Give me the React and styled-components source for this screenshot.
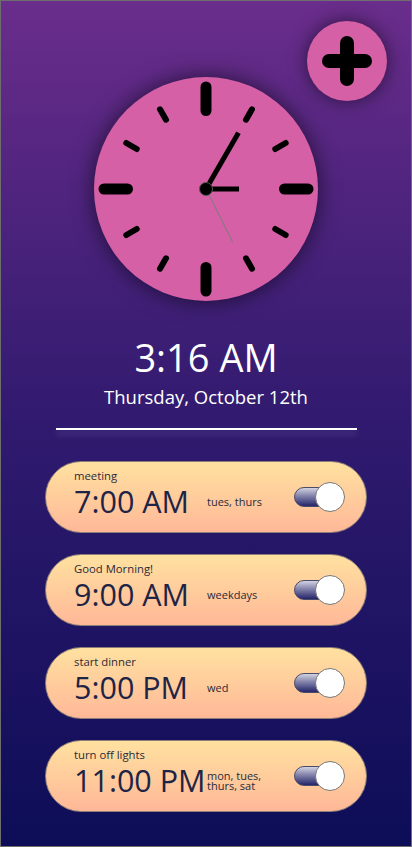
import React from "react";
import styled, { createGlobalStyle } from "styled-components";

const Global = createGlobalStyle`
  html, body { margin: 0; padding: 0; }
  body { font-family: "Open Sans", "Noto Sans", sans-serif; }
  * { box-sizing: border-box; }
`;

const Page = styled.div`
  position: relative;
  width: 412px;
  height: 847px;
  border: 1px solid #6e6e6e;
  background: linear-gradient(180deg, #6a2d8b 0%, #301a6f 50%, #0d0d57 100%);
  display: flex;
  flex-direction: column;
  align-items: center;
  overflow: hidden;
`;

const AddButton = styled.button`
  position: absolute;
  top: 20px;
  right: 24px;
  width: 80px;
  height: 80px;
  border-radius: 50%;
  border: none;
  padding: 0;
  background: #d660a5;
  box-shadow: 0 0 18px rgba(0, 0, 0, 0.55);
  display: flex;
  align-items: center;
  justify-content: center;
`;

const ClockFace = styled.div`
  margin-top: 76px;
  width: 224px;
  height: 224px;
  border-radius: 50%;
  background: #d660a5;
  box-shadow: 0 0 22px rgba(0, 0, 0, 0.6);
  flex-shrink: 0;
`;

const TimeText = styled.div`
  margin-top: 34px;
  font-size: 38px;
  line-height: 44px;
  color: #ffffff;
  text-align: center;
`;

const DateText = styled.div`
  margin-top: 6px;
  font-size: 18.5px;
  line-height: 24px;
  color: #ffffff;
  text-align: center;
`;

const Divider = styled.div`
  margin-top: 19px;
  width: 301px;
  height: 1.5px;
  background: #ffffff;
  box-shadow: 0 4px 6px rgba(255, 255, 255, 0.22);
`;

const AlarmList = styled.div`
  margin-top: 31px;
  display: flex;
  flex-direction: column;
  gap: 21px;
`;

const Card = styled.div`
  width: 322px;
  height: 72px;
  border-radius: 36px;
  border: 1px solid #8d7f78;
  background: linear-gradient(180deg, #ffe1a0 0%, #ffb898 100%);
  display: flex;
  align-items: center;
  padding: 0 21px 0 28px;
  color: #1e2446;
`;

const Info = styled.div`
  align-self: flex-start;
  padding-top: 7px;
  display: flex;
  flex-direction: column;
  flex: 1;
`;

const Label = styled.div`
  font-size: 11.3px;
  line-height: 13px;
  color: #2a2a38;
`;

const Row = styled.div`
  display: flex;
  align-items: center;
  margin-top: 1px;
`;

const AlarmTime = styled.div`
  min-width: 133px;
  font-size: 30.5px;
  line-height: 36px;
  white-space: nowrap;
`;

const Days = styled.div`
  max-width: 64px;
  font-size: 11px;
  line-height: 10px;
  color: #2a2a38;
  padding-top: 2px;
`;

const Toggle = styled.div`
  position: relative;
  width: 51px;
  height: 30px;
  flex-shrink: 0;
  display: flex;
  align-items: center;
`;

const Track = styled.div`
  width: 44px;
  height: 20px;
  border-radius: 10px;
  border: 1px solid #4a4a6a;
  background: linear-gradient(180deg, #d2d2e2 0%, #8a8ab0 40%, #25256a 100%);
`;

const Knob = styled.div`
  position: absolute;
  right: 0;
  top: 0;
  width: 30px;
  height: 30px;
  border-radius: 50%;
  background: #ffffff;
  border: 1px solid #777777;
`;

function Clock() {
  const c = 112;
  const ticks = [];
  for (let i = 0; i < 12; i++) {
    const a = (i * 30 * Math.PI) / 180;
    const major = i % 3 === 0;
    const r1 = major ? 78.5 : 80;
    const r2 = major ? 102 : 92;
    ticks.push(
      <line
        key={i}
        x1={c + r1 * Math.sin(a)}
        y1={c - r1 * Math.cos(a)}
        x2={c + r2 * Math.sin(a)}
        y2={c - r2 * Math.cos(a)}
        stroke="#000"
        strokeWidth={major ? 11 : 6}
        strokeLinecap="round"
      />
    );
  }
  const hand = (deg, len) => {
    const a = (deg * Math.PI) / 180;
    return { x2: c + len * Math.sin(a), y2: c - len * Math.cos(a) };
  };
  const h = hand(90, 33);
  const m = hand(30, 65);
  const s = hand(153.4, 60);
  return (
    <ClockFace>
      <svg width="224" height="224" viewBox="0 0 224 224">
        {ticks}
        <line x1={c} y1={c} {...h} stroke="#000" strokeWidth="5" />
        <line x1={c} y1={c} {...m} stroke="#000" strokeWidth="5" />
        <line x1={c} y1={c} {...s} stroke="#7a7a7a" strokeWidth="1" />
        <circle cx={c} cy={c} r="6.5" fill="#000" stroke="#555" strokeWidth="1" />
      </svg>
    </ClockFace>
  );
}

const alarms = [
  { label: "meeting", time: "7:00 AM", days: "tues, thurs" },
  { label: "Good Morning!", time: "9:00 AM", days: "weekdays" },
  { label: "start dinner", time: "5:00 PM", days: "wed" },
  { label: "turn off lights", time: "11:00 PM", days: "mon, tues, thurs, sat" },
];

export default function App() {
  return (
    <>
      <Global />
      <Page>
        <AddButton aria-label="Add alarm">
          <svg width="50" height="50" viewBox="0 0 50 50">
            <line x1="25" y1="7" x2="25" y2="43" stroke="#000" strokeWidth="14" strokeLinecap="round" />
            <line x1="7" y1="25" x2="43" y2="25" stroke="#000" strokeWidth="14" strokeLinecap="round" />
          </svg>
        </AddButton>
        <Clock />
        <TimeText>3:16 AM</TimeText>
        <DateText>Thursday, October 12th</DateText>
        <Divider />
        <AlarmList>
          {alarms.map((a) => (
            <Card key={a.label}>
              <Info>
                <Label>{a.label}</Label>
                <Row>
                  <AlarmTime>{a.time}</AlarmTime>
                  <Days>{a.days}</Days>
                </Row>
              </Info>
              <Toggle>
                <Track />
                <Knob />
              </Toggle>
            </Card>
          ))}
        </AlarmList>
      </Page>
    </>
  );
}
